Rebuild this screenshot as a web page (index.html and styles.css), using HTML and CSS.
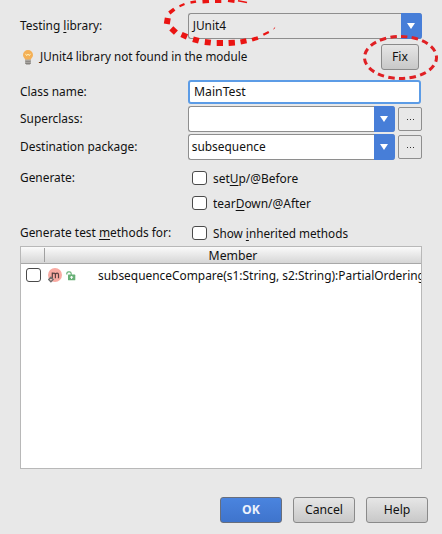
FILE: index.html
```html
<!DOCTYPE html>
<html lang="en">
<head>
<meta charset="utf-8">
<title>Create Test</title>
<link rel="stylesheet" href="styles.css">
</head>
<body>
<main class="dialog">
  <div class="row row-library">
    <span class="label">Testing <u>l</u>ibrary:</span>
    <div class="combo combo-flat"><span class="value">JUnit4</span><span class="arrow"></span></div>
  </div>
  <div class="row row-warning">
    <svg class="bulb" width="12" height="16" viewBox="0 0 12 16">
      <path d="M6 1a5 5 0 0 1 5 5c0 2.300-1.700 2.700-2.200 4.700H3.200C2.700 8.700 1 8.300 1 6a5 5 0 0 1 5-5z" fill="#f4b056"/>
      <path d="M3.500 4.800l1.200 1.900L6 5l1.300 1.700 1.200-1.900" fill="none" stroke="#fff0b8" stroke-width="1"/>
      <path d="M3.200 10.700h5.600v3.600l-1 1.200H4.200l-1-1.200z" fill="#85827e"/>
      <path d="M3.200 11.300h5.600M3.200 13.300h5.600" stroke="#c4c1bd" stroke-width=".7"/>
    </svg>
    <span class="message">JUnit4 library not found in the module</span>
    <button class="button fix"><span>Fix</span></button>
  </div>
  <div class="row row-class">
    <span class="label">Class name:</span>
    <div class="field"><span>MainTest</span></div>
  </div>
  <div class="row row-combo">
    <span class="label">Superclass:</span>
    <div class="combo"><span class="value"></span><span class="arrow"></span></div>
    <button class="browse"><i></i><i></i><i></i></button>
  </div>
  <div class="row row-combo">
    <span class="label">Destination package:</span>
    <div class="combo"><span class="value">subsequence</span><span class="arrow"></span></div>
    <button class="browse"><i></i><i></i><i></i></button>
  </div>
  <div class="row row-setup">
    <span class="label">Generate:</span>
    <label class="check"><span class="box"></span><span class="check-text">set<u>U</u>p/@Before</span></label>
  </div>
  <div class="row row-teardown">
    <span class="label"></span>
    <label class="check"><span class="box"></span><span class="check-text">tear<u>D</u>own/@After</span></label>
  </div>
  <div class="row row-inherited">
    <span class="label">Generate test <u>m</u>ethods for:</span>
    <label class="check"><span class="box"></span><span class="check-text">Show <u>i</u>nherited methods</span></label>
  </div>
  <section class="table">
    <header class="table-head"><span class="head-check"></span><span class="head-member">Member</span></header>
    <div class="table-row">
      <span class="box"></span>
      <svg class="method" width="28" height="16" viewBox="0 0 28 16">
        <circle cx="7" cy="8" r="7" fill="#f9aaa2"/>
        <path d="M4.300 11.200V5.500M4.300 7.400c.3-1.700 3-1.900 3.100.2v3.600M7.400 7.600c.3-1.900 3.100-2.100 3.100.2v3.400" fill="none" stroke="#5b4141" stroke-width="1.200"/>
        <path d="M2.900 10.200l2.300 2.300-2.300 2.300L.6 12.500z" fill="#f3c4bf" stroke="#6e6e6e" stroke-width="1.300"/>
        <path d="M18.800 7.500V6.400a1.700 1.700 0 0 1 1.700-1.500h1a1.700 1.700 0 0 1 1.700 1.600v1.500" fill="none" stroke="#67b076" stroke-width="1.200"/>
        <rect x="20" y="7.600" width="7.300" height="5.700" rx=".6" fill="#67b076"/>
        <path d="M23.600 9v3M22.100 10.200h3" stroke="#fff" stroke-width="1"/>
      </svg>
      <span class="signature">subsequenceCompare(s1:String, s2:String):PartialOrdering</span>
    </div>
  </section>
  <footer class="actions">
    <button class="button primary"><span>OK</span></button>
    <button class="button"><span>Cancel</span></button>
    <button class="button"><span>Help</span></button>
  </footer>
  <svg class="marks" width="442" height="534" viewBox="0 0 442 534">
    <g fill="none" stroke="#ea1412">
      <path d="M238 .8l9 1.700" stroke-width="1.600"/>
      <path d="M228 .6l6.500 .8" stroke-width="3"/>
      <path d="M215 1.200h6.300M202.500 1.700l6.500-.5" stroke-width="3.400"/>
      <path d="M190.500 2.600l5.500-1.200" stroke-width="2.600"/>
      <path d="M179.500 6.300l5-2.200" stroke-width="2.200"/>
      <path d="M169.300 13l5-3.900" stroke-width="3.600"/>
      <path d="M167.800 18l-1 6" stroke-width="6"/>
      <path d="M171.300 28.300l4.600 4.400" stroke-width="5.800"/>
      <path d="M181.500 34.500l5.500 2.400" stroke-width="5.600"/>
      <path d="M193 39.200l5.800 1.600" stroke-width="5.800"/>
      <path d="M204.800 42l6 .7" stroke-width="5.800"/>
      <path d="M216.700 43h6.300" stroke-width="6"/>
      <path d="M228.600 43l6.300-.4" stroke-width="5.800"/>
      <path d="M240.500 42l6-1.200" stroke-width="5"/>
      <path d="M252 39.800l6-1.900" stroke-width="3.700"/>
      <path d="M263.300 34.800l5.500-2.700" stroke-width="2.200"/>
      <path d="M273.500 29l1.600-1.400" stroke-width="1"/>
      <ellipse cx="400.500" cy="57.500" rx="36" ry="21" stroke="#e02024" stroke-width="3" pathLength="170" stroke-dasharray="6 4" stroke-dashoffset="2"/>
    </g>
  </svg>
</main>
</body>
</html>
```

FILE: styles.css
```css
* { box-sizing: border-box; }
body {
  margin: 0;
  background: #e8e8e8;
  color: #111;
  font: 13px/18px "Noto Sans", sans-serif;
  overflow: hidden;
}
button { margin: 0; padding: 0; font: inherit; color: inherit; }
u { text-decoration: underline; text-decoration-thickness: 1px; text-underline-offset: 2px; text-decoration-skip-ink: none; }
.dialog {
  position: relative;
  width: 442px;
  height: 534px;
  padding: 13px 20px 0;
}
.row { display: flex; align-items: center; white-space: nowrap; }
/* The interface face is slightly condensed. */
.label, .message, .value, .field span, .check-text, .signature { transform-origin: 0 50%; }
.label { width: 168px; flex: none; transform: translateY(-1px) scaleX(.915); }
.row-library { height: 26px; }
.row-warning { height: 26px; margin-top: 5px; }
.row-class { height: 25px; margin-top: 9px; }
.row-combo { height: 26px; margin-top: 2px; }
.row-setup { height: 18px; margin-top: 9px; }
.row-teardown { height: 18px; margin-top: 7px; }
.row-inherited { height: 18px; margin-top: 12px; }
.combo {
  display: flex;
  width: 207px;
  height: 26px;
  background: #fff;
  border: 1px solid #8e8e8e;
  border-right: 0;
  border-radius: 3px;
}
.combo-flat { width: 234px; background: #e8e8e8; }
.value { flex: 1; padding: 2px 0 0 3px; transform: scaleX(.915); }
.combo-flat .value { padding-left: 4px; }
.arrow {
  display: flex;
  align-items: center;
  justify-content: center;
  width: 21px;
  margin: -1px 0;
  background: #477ed8;
  border-radius: 0 3px 3px 0;
}
.arrow::before {
  content: "";
  margin-right: 1px;
  border: 4px solid transparent;
  border-top: 6px solid #fff;
  border-bottom: 0;
}
.bulb { margin-left: 2px; }
.message { margin-left: 6px; flex: 1; transform: translateY(-1px) scaleX(.897); }
.button {
  width: 62px;
  height: 26px;
  border: 1px solid #8a8a8a;
  border-radius: 3px;
  background: linear-gradient(#e6e6e6, #c8c8c8);
}
.button span { display: block; transform: translateY(-1px) scaleX(.94); }
.fix { width: 38px; margin-right: 3px; }
.field {
  width: 233px;
  height: 24px;
  padding: 0 0 0 4px;
  background: #fff;
  border: 2px solid #5c9ce6;
  border-radius: 3px;
}
.field span { display: block; transform: scaleX(.94); }
.browse {
  display: flex;
  align-items: center;
  justify-content: center;
  gap: 2px;
  width: 24px;
  height: 24px;
  margin-left: 3px;
  border: 1px solid #8e8e8e;
  border-radius: 2px;
  background: #e8e8e8;
}
.browse i { width: 1px; height: 1px; background: #333; }
.check { display: flex; align-items: center; gap: 6px; margin-left: 4px; }
.check-text { transform: scaleX(.918); }
.row-inherited .check-text { transform: scaleX(.903); }
.box { width: 15px; height: 14px; flex: none; background: #fff; border: 1px solid #4a4a4a; border-radius: 3px; }
.table { height: 223px; margin-top: 4px; background: #fff; border: 1px solid #b8b8b8; overflow: hidden; }
.table-head { display: flex; height: 17px; background: linear-gradient(#fafafa, #d6d6d6); border-bottom: 1px solid #a8a8a8; line-height: 17px; }
.head-check { width: 24px; margin: 1px 0; border-right: 1px solid #a0a0a0; }
.head-member { flex: 1; text-align: center; transform: scaleX(.94); }
.table-row { display: flex; align-items: center; height: 22px; padding-left: 5px; white-space: nowrap; }
.method { flex: none; margin-left: 7px; }
.signature { margin-left: 22px; transform: scaleX(.916); }
.actions { display: flex; justify-content: flex-end; gap: 11px; margin: 28px -6px 0 0; }
.primary { background: linear-gradient(#4a84df, #3f74cc); color: #edf2fc; font-weight: 700; border-color: #686e7c; }
.marks { position: absolute; left: 0; top: 0; pointer-events: none; }
```
